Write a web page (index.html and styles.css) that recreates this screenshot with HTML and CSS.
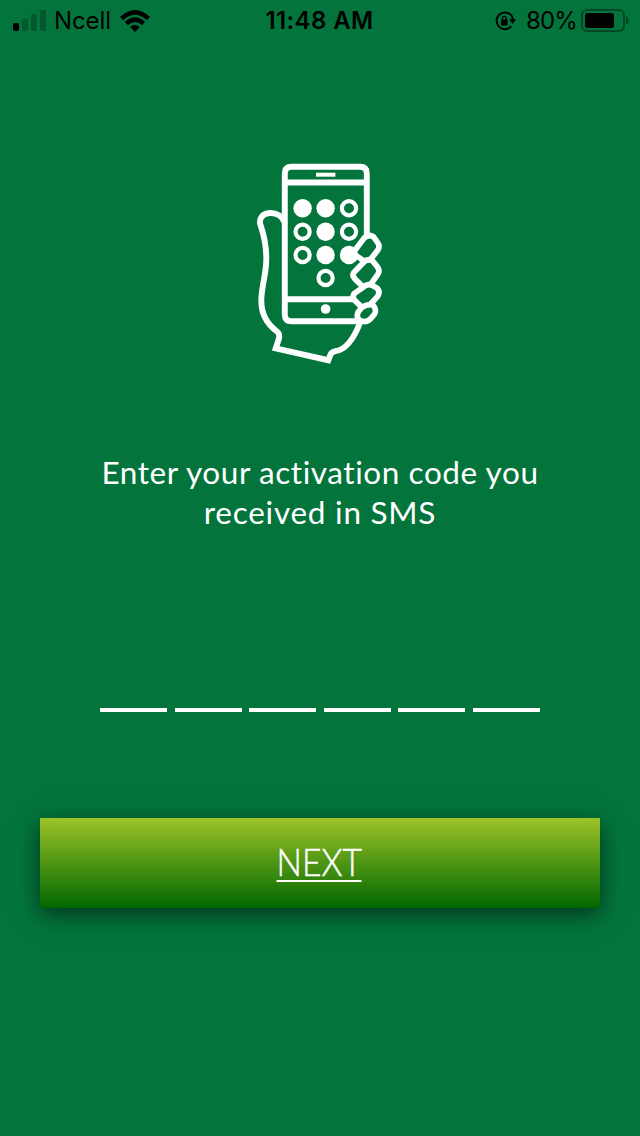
FILE: index.html
```html
<!DOCTYPE html>
<html lang="en">
<head>
<meta charset="utf-8">
<title>Activation code</title>
<link rel="stylesheet" href="styles.css">
</head>
<body>
<header class="status">
  <div class="carrier">
    <svg class="signal" viewBox="0 0 34 22"><rect x="0" y="13" width="6" height="8" rx="1.7"/><g opacity=".25"><rect x="9" y="9" width="6" height="12" rx="1.7"/><rect x="18" y="4" width="6" height="17" rx="1.7"/><rect x="27" y="0" width="6" height="21" rx="1.7"/></g></svg>
    <span class="network">Ncell</span>
    <svg class="wifi" viewBox="0 0 30 22"><g fill="none" stroke="#000" stroke-width="4.4"><path d="M1.6 8.6Q15-3.8 28.4 8.6"/><path d="M6.4 13.5Q15 5.7 23.6 13.5"/></g><path d="M10.2 17.1Q15 13 19.8 17.1L15 22Z"/></svg>
  </div>
  <span class="time">11:48 AM</span>
  <div class="power">
    <svg class="lock" viewBox="0 0 22 20"><path d="M17.2 4.2A8.4 8.4 0 1 0 17.2 15.4M17.2 4.2Q18.6 6 18.7 9" fill="none" stroke="#000" stroke-width="2"/><path d="M15.2 8.3H22L18.6 13Z"/><rect x="7" y="8.5" width="6.6" height="6" rx="1"/><path d="M8.4 9V7.2a1.9 1.9 0 0 1 3.8 0V9" fill="none" stroke="#000" stroke-width="1.3"/></svg>
    <span class="percent">80%</span>
    <svg class="battery" viewBox="0 0 48 24"><rect x="1" y="1" width="42" height="21" rx="5" fill="none" stroke="#000" stroke-width="2" opacity=".38"/><rect x="4" y="4" width="29" height="15" rx="2.5"/><path d="M45 7.5q2.8 1.2 2.8 4t-2.8 4Z" opacity=".42"/></svg>
  </div>
</header>
<main class="screen">
  <svg class="hand" viewBox="250 160 140 210" fill="none" stroke="#fff" stroke-width="5.9">
    <path d="M366.8 237V173.500Q366.800 166.800 360 166.800H291.500Q284.800 166.800 284.800 173.500V314.500Q284.800 321.300 291.500 321.300H358"/>
    <path d="M285 182.500H367M285 299.300H353"/>
    <path d="M316 174.700H335.400" stroke-width="4"/>
    <g fill="#fff" stroke="none"><circle cx="302.600" cy="208.300" r="9.200"/><circle cx="325.600" cy="208.300" r="9.200"/><circle cx="325.600" cy="231.700" r="9.200"/><circle cx="325.600" cy="255" r="9.200"/><circle cx="349" cy="255" r="9.200"/><circle cx="325.600" cy="309" r="4.800"/></g>
    <g stroke-width="4.200"><circle cx="349" cy="208.300" r="7.100"/><circle cx="302.600" cy="231.700" r="7.100"/><circle cx="349" cy="231.700" r="7.100"/><circle cx="302.600" cy="255" r="7.100"/><circle cx="325.600" cy="278" r="7.100"/></g>
    <path d="M284.500 222C282 216 276 212.700 270 213C262 213.500 258.500 219 260.500 225C264 235 266.300 248 266.300 259C266.300 275 261.300 286 261.300 301C261.300 315 267 324 277 331.500C279.500 333.500 279.500 337 278.500 340L275.700 348.300L328.300 360.200L330.200 355.200Q331.500 351.800 335.500 351.200C347 349.500 355 336 360.300 322"/>
    <g transform="translate(340 225) scale(.3333)" stroke-width="17" fill="#03753c">
      <path d="M72 40Q86 26 100 35L113 53Q121 64 113 76L94 100Q82 111 68 105L50 93Q39 84 46 74Z"/>
      <path d="M68 115Q82 99 98 108L112 125Q121 137 113 149L92 178Q79 190 64 181L45 162Q35 151 42 142Z"/>
      <path d="M68 188Q82 174 97 181L113 191Q121 201 113 214L92 237Q79 250 62 243L45 227Q35 217 42 206Z"/>
      <path d="M66 247Q84 236 99 240Q111 254 104 267L91 282Q79 294 62 287Q47 279 54 262Z"/>
    </g>
  </svg>
  <p class="prompt"><span class="line one">Enter your activation code you</span><span class="line two">received in SMS</span></p>
  <div class="code"><i></i><i></i><i></i><i></i><i></i><i></i></div>
  <button class="next"><span class="label">NEXT</span></button>
</main>
</body>
</html>
```
FILE: styles.css
```css
* { box-sizing: border-box; }
body { margin: 0; width: 640px; height: 1136px; background: #03753c; overflow: hidden; }
svg { display: block; flex: none; }
.status { height: 40px; display: grid; grid-template-columns: 252px 1fr 252px; align-items: center; padding: 0 11px 0 13px; font: 24px/40px Inter, sans-serif; color: #000; white-space: nowrap; }
.carrier, .power { display: flex; align-items: center; }
.power { justify-content: flex-end; }
.signal { width: 34px; height: 22px; }
.network { width: 57px; margin: 0 9px 0 7px; letter-spacing: -.1px; padding-top: 1px; }
.wifi { width: 30px; height: 22px; }
.time { text-align: center; font-weight: 600; letter-spacing: .4px; padding: 1px 3px 0 0; }
.lock { width: 22px; height: 20px; margin-right: 10px; }
.percent { width: 50px; margin-right: 5px; padding-top: 1px; letter-spacing: -.9px; }
.battery { width: 48px; height: 24px; }
.screen { padding: 120px 40px 0; display: flex; flex-direction: column; align-items: center; }
.hand { width: 140px; height: 210px; }
.prompt { margin: 82px 0 0; font: 31.5px/40px Lato, sans-serif; color: #fff; text-align: center; white-space: nowrap; }
.line { display: block; }
.one { letter-spacing: .58px; }
.two { letter-spacing: .75px; }
.code { width: 440px; margin-top: 176px; display: flex; justify-content: space-between; gap: 7.6px; }
.code i { flex: 1; height: 4px; background: #fff; }
.next { width: 560px; height: 90px; margin-top: 106px; border: 0; padding: 0 2px 4px 0; background: linear-gradient(#9dc328, #006800); box-shadow: 0 6px 22px rgba(0,0,0,.58); color: #fff; font: 300 38px/86px Lato, sans-serif; -webkit-text-stroke: .5px #fff; }
.label { display: inline-block; line-height: 36px; padding-bottom: 1px; border-bottom: 2px solid #fff; transform: scaleX(.885); }
```
